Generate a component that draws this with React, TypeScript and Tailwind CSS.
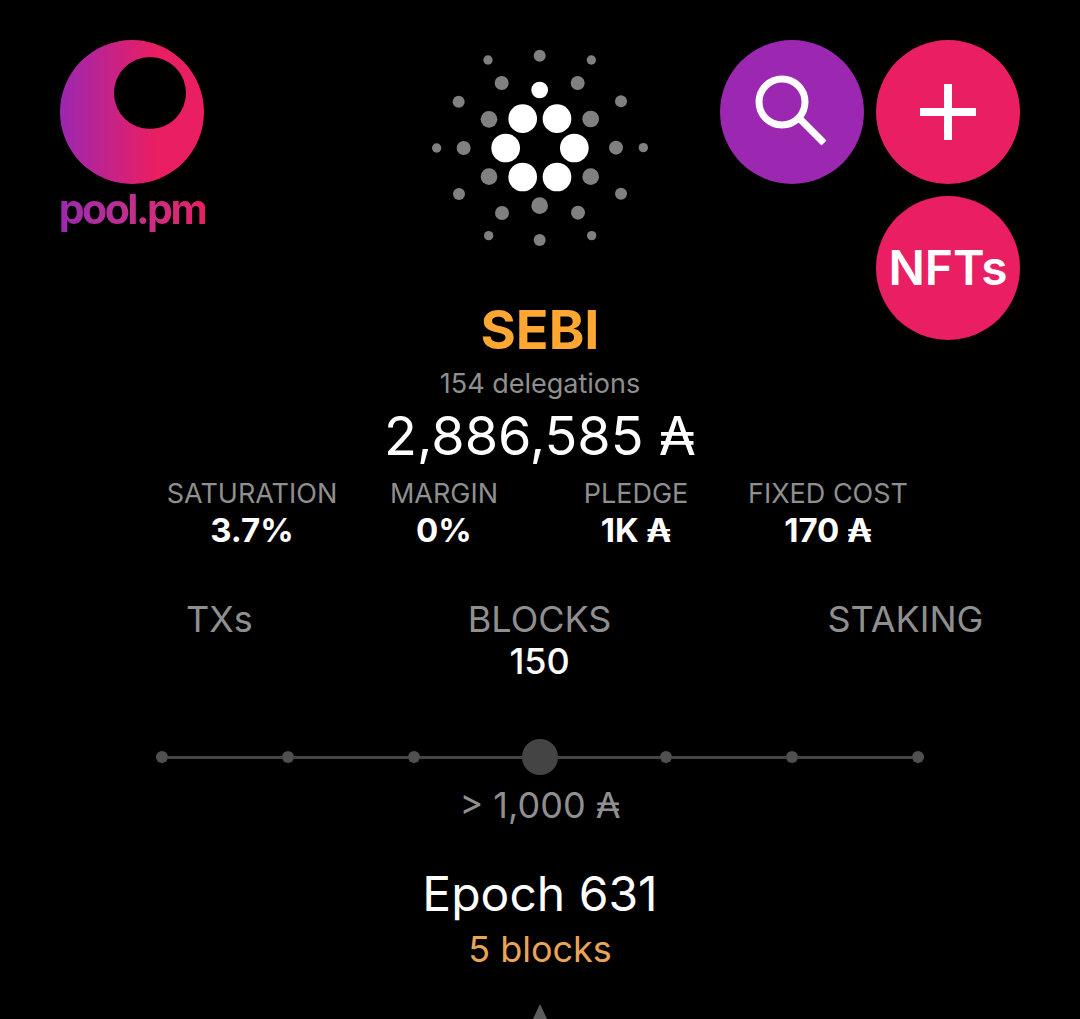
const ADA = '\u20B3';

const whiteDots = [
  [308, 236, 43], [411, 236, 43], [257, 324, 43], [463, 324, 43], [308, 411, 43], [411, 411, 43], [359, 150, 25],
];

const grayDots = [
  [359, 47, 18], [204, 60, 14], [514, 60, 14], [245, 129, 21], [473, 129, 21], [116, 185, 18], [603, 184, 18],
  [207, 238, 25], [512, 237, 25], [50, 324, 14], [131, 324, 21], [588, 323, 21], [670, 323, 14], [207, 410, 25],
  [512, 410, 25], [117, 462, 18], [603, 461, 18], [359, 497, 25], [246, 519, 21], [474, 518, 21], [206, 587, 14],
  [515, 587, 14], [359, 600, 18],
];

const stats = [
  { label: 'SATURATION', value: '3.7%' },
  { label: 'MARGIN', value: '0%' },
  { label: 'PLEDGE', value: `1K ${ADA}` },
  { label: 'FIXED COST', value: `170 ${ADA}` },
];

function PoolLogo() {
  return (
    <div className="flex w-[144px] flex-col items-center">
      <svg width="144" height="144" viewBox="0 0 144 144">
        <defs>
          <linearGradient id="pool" x1="0" y1="0" x2="1" y2="0">
            <stop offset="0" stopColor="#9c27b0" />
            <stop offset="0.65" stopColor="#e91e63" />
          </linearGradient>
        </defs>
        <circle cx="72" cy="72" r="72" fill="url(#pool)" />
        <circle cx="90" cy="53" r="36" fill="#000" />
      </svg>
      <span className="whitespace-nowrap bg-gradient-to-r from-[#9c27b0] to-[#e91e63] bg-clip-text text-[41px] leading-[50px] font-bold tracking-[-2.5px] text-transparent">
        pool.pm
      </span>
    </div>
  );
}

function CardanoLogo() {
  return (
    <svg width="240" height="220" viewBox="0 0 720 660">
      {grayDots.map(([x, y, r]) => (
        <circle key={`${x}-${y}`} cx={x} cy={y} r={r} fill="#808080" />
      ))}
      {whiteDots.map(([x, y, r]) => (
        <circle key={`${x}-${y}`} cx={x} cy={y} r={r} fill="#fff" />
      ))}
    </svg>
  );
}

function SliderStop({ active }: { active?: boolean }) {
  return (
    <div className="flex h-3 w-3 items-center justify-center">
      {active ? (
        <div className="h-9 w-9 shrink-0 rounded-full bg-[#444444]" />
      ) : (
        <div className="h-3 w-3 rounded-full bg-[#505050]" />
      )}
    </div>
  );
}

export default function App() {
  const stops = [false, false, false, true, false, false, false];

  return (
    <div className="h-[1019px] w-[1080px] overflow-hidden bg-black font-['Inter',sans-serif] text-white">
      <header className="grid h-[300px] grid-cols-[1fr_240px_1fr] px-[60px] pt-10">
        <PoolLogo />
        <CardanoLogo />
        <div className="flex flex-wrap content-start justify-end gap-3">
          <button className="flex h-36 w-36 items-center justify-center rounded-full bg-[#9c27b0]">
            <svg width="144" height="144" viewBox="0 0 144 144" fill="none" stroke="#fff">
              <circle cx="62" cy="62" r="23" strokeWidth="7" />
              <path d="M80 79 L104 103" strokeWidth="7" />
            </svg>
          </button>
          <button className="flex h-36 w-36 items-center justify-center rounded-full bg-[#e91e63]">
            <svg width="144" height="144" viewBox="0 0 144 144" fill="none" stroke="#fff" strokeWidth="8">
              <path d="M72 44 V100 M44 72 H100" />
            </svg>
          </button>
          <button className="flex h-36 w-36 items-center justify-center rounded-full bg-[#e91e63] text-[48px] font-semibold">
            NFTs
          </button>
        </div>
      </header>

      <main className="flex flex-col items-center">
        <h1 className="text-[54px] leading-[60px] font-bold text-[#ffa733]">SEBI</h1>
        <p className="mt-[9px] text-[27px] leading-[30px] text-[#8f8f8f]">154 delegations</p>
        <p className="mt-[5px] text-[54px] leading-[64px]">2,886,585 {ADA}</p>

        <div className="mt-[10px] grid w-[768px] grid-cols-4 text-center">
          {stats.map((stat) => (
            <div key={stat.label}>
              <div className="text-[27px] leading-[32px] text-[#8f8f8f]">{stat.label}</div>
              <div className="mt-px text-[33px] leading-[38px] font-bold">{stat.value}</div>
            </div>
          ))}
        </div>

        <div className="mt-[48px] flex w-full gap-[216px] pl-[186px] text-[36px] leading-[44px] text-[#8f8f8f]">
          <div>TXs</div>
          <div className="-ml-px flex flex-col items-center">
            <span>BLOCKS</span>
            <span className="leading-[40px] font-medium text-white">150</span>
          </div>
          <div>STAKING</div>
        </div>

        <div className="mt-[70px] flex w-[768px] items-center">
          {stops.map((active, i) => (
            <div key={i} className={i === 0 ? 'flex items-center' : 'flex flex-1 items-center'}>
              {i > 0 && <div className="h-[3px] flex-1 bg-[#444444]" />}
              <SliderStop active={active} />
            </div>
          ))}
        </div>

        <p className="mt-[22px] text-[36px] leading-[40px] text-[#8f8f8f]">&gt; 1,000 {ADA}</p>
        <p className="mt-[40px] text-[48px] leading-[58px]">Epoch 631</p>
        <p className="mt-[6px] text-[36px] leading-[40px] text-[#e8a557]">5 blocks</p>

        <svg className="mt-[35px] shrink-0" width="28" height="30" viewBox="0 0 28 30">
          <path d="M14 0 L28 30 H0 Z" fill="#5c5c5c" />
        </svg>
      </main>
    </div>
  );
}
